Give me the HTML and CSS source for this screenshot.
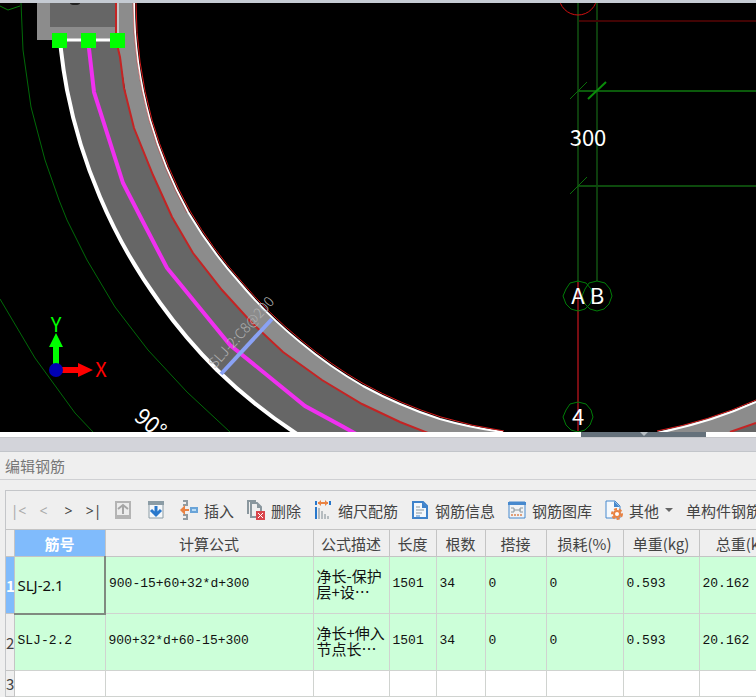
FILE: index.html
```html
<!DOCTYPE html>
<html lang="zh-CN">

<head>
    <meta charset="UTF-8">
    <meta name="viewport" content="width=device-width, initial-scale=1.0">
    <title>编辑钢筋</title>
    <link rel="stylesheet" href="styles.css">
</head>

<body>
    <div class="top-edge"></div>

    <!-- drawing area -->
    <svg class="canvas" viewBox="0 3 756 429" preserveAspectRatio="xMinYMax slice">
        <rect x="0" y="0" width="756" height="432" fill="#000" />

        <!-- axis arcs -->
        <g fill="none" stroke="#006a08" stroke-width="1">
            <path d="M21 3L23 50L31 107L45 160L59 200L67 220L87 260L115 307L148 350L187 392L230 432" />
            <path d="M0 299L35 358L75 413L93 432" />
            <path d="M0 6L8 10L20 6" stroke="#007d08" />
        </g>

        <!-- ring slab and beam -->
        <path fill="#8c8c8c" d="M37 3H134A443 443 0 0 0 150 120A443 443 0 0 0 188 212A443 443 0 0 0 240 283A443 443 0 0 0 300 342A443 443 0 0 0 363 386A443 443 0 0 0 440 419A443 443 0 0 0 503 432H295L160 303L117 40H37Z" />
        <path fill="#666" d="M60 40H117L120 57L124 88L134 128L153 175L172 217L193 253L222 290L252 323L283 352L322 380L362 404L400 422L426 432H295A530 530 0 0 1 217 370A530 530 0 0 1 160 303A530 530 0 0 1 100 197A530 530 0 0 1 67 90L60 40Z" />
        <path fill="#8c8c8c" d="M657 432L700 421L733 410L756 401V432Z" />
        <path fill="#666" d="M730 432L756 423V432Z" />
        <rect x="50" y="3" width="66" height="24" fill="#666" />
        <ellipse cx="75" cy="3" rx="5" ry="2" fill="#222" />

        <g fill="none">
            <path stroke="#fff" stroke-width="4" d="M60 40L61 50A530 530 0 0 0 67 90A530 530 0 0 0 100 197A530 530 0 0 0 160 303A530 530 0 0 0 217 370A530 530 0 0 0 297 434" />
            <path stroke="#fff" stroke-width="2" d="M134 3A443 443 0 0 0 150 120A443 443 0 0 0 188 212A443 443 0 0 0 240 283A443 443 0 0 0 300 342A443 443 0 0 0 363 386A443 443 0 0 0 440 419A443 443 0 0 0 503 432M657 433A443 443 0 0 0 756 402" />
            <path stroke="#d61c1c" stroke-width="1" d="M136 3A442 442 0 0 0 152 120A442 442 0 0 0 190 211A442 442 0 0 0 241 281A442 442 0 0 0 301 340A442 442 0 0 0 364 384A442 442 0 0 0 441 417A442 442 0 0 0 504 431M657 431A442 442 0 0 0 756 400" />
            <path stroke="#c42424" stroke-width="1" d="M133 3A444 444 0 0 0 149 120A444 444 0 0 0 187 213" opacity="0.5" />
            <path stroke="#c42424" stroke-width="2" d="M116 3V40L120 57L124 88L134 128L153 175L172 217L193 253L222 290L252 323L283 352L322 380L362 404L400 422L428 433M730 432L756 423" />
            <path stroke="#fff" stroke-width="1" d="M118 3V34" />
            <path stroke="#f030f0" stroke-width="4" d="M88 40L94 92L123 183L141 218L167 268L230 345L305 406L340 425L358 435" />
            <path stroke="#8aa2f5" stroke-width="4" d="M221 374L272 319" />
            <path stroke="#fff" stroke-width="3" d="M60 40H117" />
        </g>
        <g fill="#0f0">
            <rect x="52" y="33" width="15" height="15" />
            <rect x="81" y="33" width="15" height="15" />
            <rect x="110" y="33" width="15" height="15" />
        </g>
        <text class="rebar-label" transform="translate(215 369) rotate(-48)">SLJ-2:C8@200</text>
        <text class="label" transform="translate(133 419) rotate(40)">90°</text>

        <!-- dimension lines -->
        <g fill="none" stroke-width="2">
            <path stroke="#0d3d0d" d="M578 3V282M597 3V281" />
            <path stroke="#0b5a0b" d="M578 91H756" />
            <path stroke="#0d4a0d" d="M578 186H756" />
            <path stroke="#420404" d="M579 21H756" />
            <path stroke="#780d12" d="M578 282V431" />
            <path stroke="#0a6e0a" stroke-width="1" d="M570 99L587 82M570 194L587 177" />
            <path stroke="#0a8c0a" stroke-width="2" d="M588 99L606 82" />
            <circle cx="578" cy="-4" r="19" stroke="#d01010" stroke-width="1" />
        </g>
        <g fill="none" stroke="#007d08" stroke-width="1">
            <path id="bubble" d="M578 281L586 283L591 289L593 296L590 304L585 309L578 311L571 309L566 304L563 296L566 289L570 283Z" />
            <use href="#bubble" x="19" />
            <use href="#bubble" y="121" />
        </g>
        <g class="label" text-anchor="middle">
            <text x="588" y="146">300</text>
            <text x="578" y="304">A</text>
            <text x="597" y="304">B</text>
            <text x="578" y="425">4</text>
        </g>

        <!-- coordinate axes -->
        <path fill="#0f0" d="M53 368V347H49L56 333L63 347H59V368Z" />
        <path fill="#f00" d="M58 367H78V363L93 370L78 377V373H58Z" />
        <circle cx="56" cy="370" r="7" fill="#0000b4" />
        <text class="axis" x="56" y="332" fill="#0f0" text-anchor="middle">Y</text>
        <text class="axis" x="101" y="377" fill="#f00" text-anchor="middle">X</text>
    </svg>

    <div class="splitter">
        <button class="handle" aria-label="折叠"><svg width="8" height="4" viewBox="0 0 8 4"><path fill="#b8bfc4" d="M0 0H8L4 4Z" /></svg></button>
    </div>
    <div class="divider"></div>

    <!-- rebar editor -->
    <h1 class="title">编辑钢筋</h1>
    <div class="panel">
        <div class="toolbar">
            <button class="nav" disabled>|&lt;</button>
            <button class="nav" disabled>&lt;</button>
            <button class="nav">&gt;</button>
            <button class="nav">&gt;|</button>
            <button class="move" aria-label="上移"><svg width="16" height="18" viewBox="0 0 16 18"><path fill="#ececec" stroke="#b4b4b4" stroke-width="2" d="M1 1H15V17H1Z" /><path fill="#b4b4b4" d="M1 14H15V17H1Z" /><path fill="none" stroke="#a6a6a6" stroke-width="2" d="M8 13V4M3 8L8 4L13 8" /></svg></button>
            <button class="move" aria-label="下移"><svg width="16" height="18" viewBox="0 0 16 18"><path fill="#f4f7fa" stroke="#8b9ca5" d="M1 1H15V17H1Z" /><path fill="#8b9ca5" d="M0 0H16V4H0Z" /><path fill="none" stroke="#2878cc" stroke-width="3" d="M8 5V14M3 9L8 14L13 9" /></svg></button>
            <button class="tool first"><svg width="18" height="20" viewBox="0 0 18 20"><path fill="none" stroke="#909ba1" stroke-width="2" d="M3 1H7V5H3M3 15H7V19H3" /><path fill="#e98242" d="M0 10L5 5V9H9V11H5V15Z" /><path fill="#b9dcf5" stroke="#6aa4d8" stroke-width="2" d="M11 8H17V12H11Z" /></svg>插入</button>
            <button class="tool"><svg width="18" height="20" viewBox="0 0 18 20"><path fill="none" stroke="#8a979e" stroke-width="2" d="M1 14V1H9M4 17V3H10L14 7V17Z" /><path fill="#8a979e" d="M10 3L15 8H10Z" /><path fill="#d9454b" d="M9 11H18V20H9Z" /><path stroke="#fff" d="M11 13L16 18M16 13L11 18" /></svg>删除</button>
            <button class="tool"><svg width="18" height="20" viewBox="0 0 18 20"><path fill="none" stroke="#2878cc" d="M2 1V5M16 1V5M2 7V19" stroke-width="2" /><path fill="none" stroke="#e98242" stroke-width="2" d="M4 3H14" /><path fill="#e98242" d="M4 3L7 0V6ZM14 3L11 0V6Z" /><path fill="none" stroke="#7c8990" d="M5 8V19M8 11V19M11 14V19M14 16V19" /></svg>缩尺配筋</button>
            <button class="tool"><svg width="18" height="20" viewBox="0 0 18 20"><path fill="#f4f8fc" stroke="#3f83cb" stroke-width="2" d="M2 2H12L16 6V18H2Z" /><path fill="#3f83cb" d="M11 2L17 8H11Z" /><path stroke="#8a979e" d="M5 7H9M5 10H13M5 13H11" /><path stroke="#3f83cb" d="M5 16H9" /></svg>钢筋信息</button>
            <button class="tool"><svg width="18" height="20" viewBox="0 0 18 20"><path fill="#f1f3f5" stroke="#4789ce" d="M1 2H17V18H1Z" /><path fill="#4789ce" d="M0 2H18V5H0Z" /><path fill="none" stroke="#8a979e" d="M3 8H6V12H3M6 10H13M15 8H12V12H15" /><path stroke="#e0a07a" stroke-dasharray="2 1" stroke-width="2" d="M3 15H15" /></svg>钢筋图库</button>
            <button class="tool"><svg width="18" height="20" viewBox="0 0 18 20"><path fill="#f4f8fc" stroke="#4789ce" d="M1 1H10L15 6V18H1Z" /><path fill="#4789ce" d="M9 1L15 7H9Z" /><circle cx="12" cy="14" r="5" fill="none" stroke="#e98242" stroke-width="2" stroke-dasharray="3 2" /><circle cx="12" cy="14" r="3" fill="#fff" stroke="#e98242" stroke-width="2" /></svg>其他<svg width="8" height="4" viewBox="0 0 8 4"><path fill="#666" d="M0 0H8L4 4Z" /></svg></button>
            <button class="tool">单构件钢筋</button>
        </div>

        <table class="grid">
            <colgroup>
                <col class="c-index">
                <col class="c-name">
                <col class="c-formula">
                <col class="c-desc">
                <col class="c-length">
                <col class="c-count">
                <col class="c-lap">
                <col class="c-loss">
                <col class="c-unit">
                <col class="c-total">
            </colgroup>
            <thead>
                <tr>
                    <th></th>
                    <th class="selected">筋号</th>
                    <th>计算公式</th>
                    <th>公式描述</th>
                    <th>长度</th>
                    <th>根数</th>
                    <th>搭接</th>
                    <th>损耗(%)</th>
                    <th>单重(kg)</th>
                    <th>总重(kg)</th>
                </tr>
            </thead>
            <tbody>
                <tr class="filled">
                    <th class="selected">1</th>
                    <td class="current">SLJ-2.1</td>
                    <td>900-15+60+32*d+300</td>
                    <td class="desc">净长-保护<br>层+设…</td>
                    <td>1501</td>
                    <td>34</td>
                    <td>0</td>
                    <td>0</td>
                    <td>0.593</td>
                    <td>20.162</td>
                </tr>
                <tr class="filled">
                    <th>2</th>
                    <td>SLJ-2.2</td>
                    <td>900+32*d+60-15+300</td>
                    <td class="desc">净长+伸入<br>节点长…</td>
                    <td>1501</td>
                    <td>34</td>
                    <td>0</td>
                    <td>0</td>
                    <td>0.593</td>
                    <td>20.162</td>
                </tr>
                <tr class="empty">
                    <th>3</th>
                    <td></td>
                    <td></td>
                    <td></td>
                    <td></td>
                    <td></td>
                    <td></td>
                    <td></td>
                    <td></td>
                    <td></td>
                </tr>
            </tbody>
        </table>
    </div>
</body>

</html>
```

FILE: styles.css
```css
* {
    box-sizing: border-box;
}

body {
    display: flex;
    flex-direction: column;
    height: 100vh;
    margin: 0;
    overflow: hidden;
    background-color: #efefef;
    color: #444;
    font-family: "Noto Sans CJK SC", sans-serif;
    font-size: 15px;
}

button {
    padding: 0;
    border: none;
    background: none;
    color: inherit;
    font: inherit;
    cursor: pointer;
}

.top-edge {
    flex: none;
    height: 3px;
    background-color: #c5cbd3;
}

/* drawing */
.canvas {
    display: block;
    flex: 1 1 0;
    width: 100%;
    min-height: 0;
    background-color: #000;
}

.label {
    fill: #fff;
    font-size: 22px;
}

.rebar-label {
    fill: #b0b0b0;
    font-size: 14px;
    font-weight: 300;
}

.axis {
    font-size: 20px;
}

.splitter {
    display: flex;
    flex: none;
    justify-content: flex-end;
    height: 5px;
    padding-right: 50px;
    background-color: #fff;
}

.handle {
    display: flex;
    justify-content: center;
    width: 125px;
    height: 5px;
    background-color: #65717b;
}

.divider {
    flex: none;
    height: 15px;
    border-top: 1px solid #c6c7cb;
    border-bottom: 1px solid #c2c5ca;
    background-color: #d3d4da;
}

/* editor panel */
.title {
    flex: none;
    height: 28px;
    margin: 0;
    padding-left: 5px;
    border-bottom: 1px solid #cfd0d3;
    color: #777;
    font-size: 15px;
    font-weight: normal;
    line-height: 27px;
}

.panel {
    flex: none;
    margin: 10px 0 0 5px;
    overflow: hidden;
    border-top: 1px solid #c4c6c9;
    border-left: 1px solid #c4c6c9;
}

.toolbar {
    display: flex;
    align-items: center;
    height: 38px;
    white-space: nowrap;
}

.nav {
    flex: none;
    width: 25px;
    font-family: "Noto Sans", sans-serif;
    font-size: 14px;
}

.nav:disabled {
    color: #aaa;
}

.move {
    display: flex;
    flex: none;
    justify-content: center;
    width: 33px;
}

.tool {
    display: flex;
    flex: none;
    align-items: center;
    gap: 6px;
    margin-right: 13px;
}

.first {
    margin-left: 8px;
}

/* rebar table */
.grid {
    width: 100%;
    min-width: 783px;
    border-collapse: collapse;
    table-layout: fixed;
    background-color: #fff;
}

.c-index { width: 8px; }
.c-name { width: 91px; }
.c-formula { width: 208px; }
.c-desc { width: 76px; }
.c-length { width: 47px; }
.c-count { width: 49px; }
.c-lap { width: 61px; }
.c-loss { width: 77px; }
.c-unit { width: 76px; }
.c-total { width: 90px; }

.grid th,
.grid td {
    height: 27px;
    padding: 0;
    border: 1px solid #d0d3d0;
    white-space: nowrap;
}

.grid th {
    border-color: #c4c4c4;
    background-color: #efefef;
    font-weight: normal;
}

.grid tr > :first-child {
    border-left: none;
}

.grid td {
    padding: 0 3px;
    color: #111;
    font-family: "Liberation Mono", monospace;
    font-size: 13px;
}

.grid .filled td {
    height: 57px;
    padding-bottom: 4px;
    background-color: #ccffd9;
}

.grid .empty th,
.grid .empty td {
    height: 26px;
    line-height: 22px;
}

.grid .filled .desc {
    padding-bottom: 2px;
    font-family: "Noto Sans CJK SC", sans-serif;
    font-size: 15px;
    line-height: 16px;
}

.grid .filled .current {
    padding-bottom: 0;
    border-right: 2px solid #808a80;
    border-bottom: 2px solid #808a80;
    font-family: "Noto Sans", sans-serif;
    font-size: 15px;
}

.grid .selected {
    background-color: #80bbfc;
    color: #fff;
    font-weight: bold;
}
```
